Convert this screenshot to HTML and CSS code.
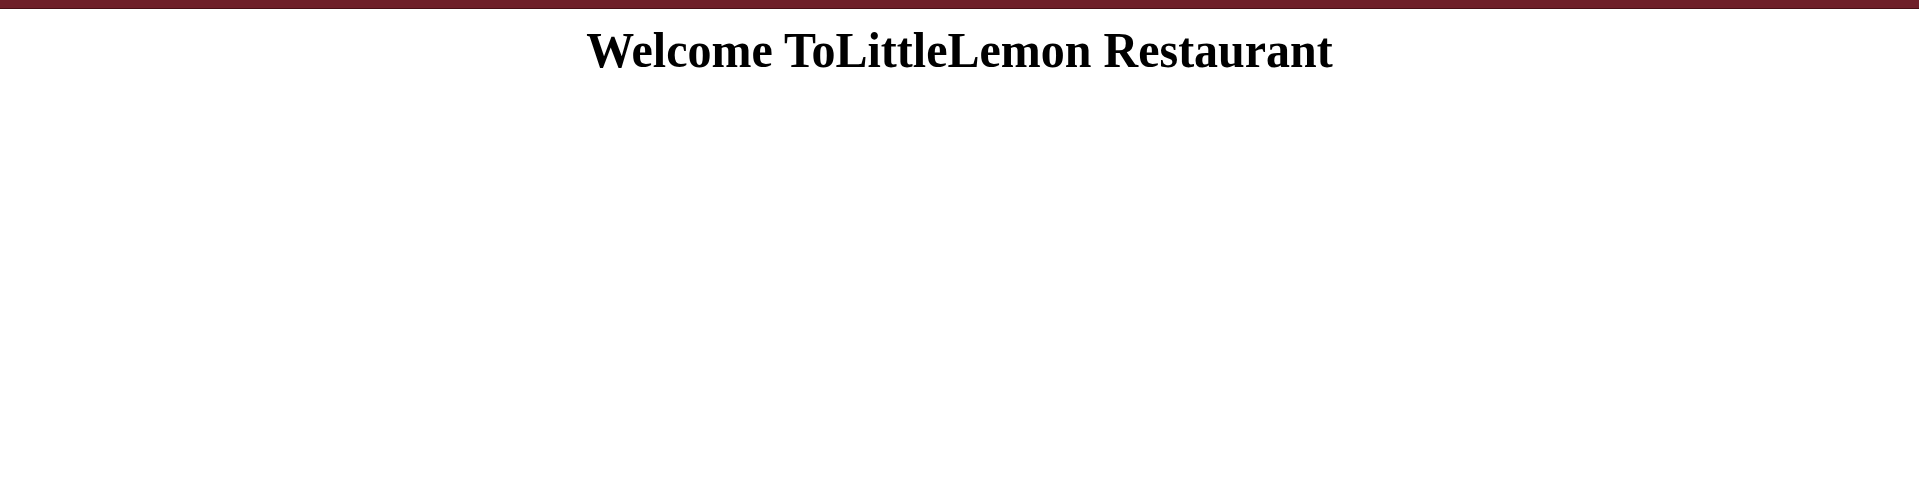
FILE: index.html
```html
<!DOCTYPE html>
<html>
<head>
<meta charset="utf-8">
<link rel="stylesheet" href="styles.css">
</head>
<body>
<header class="topbar"></header>
<h1 class="title">Welcome ToLittleLemon Restaurant</h1>
</body>
</html>
```
FILE: styles.css
```css
html, body { margin: 0; padding: 0; background: #fff; }
.topbar { height: 8px; background: #6f1f29; border-bottom: 1px solid #4a0f17; }
.title {
  margin: 18px 0 0;
  text-align: center;
  font-family: "Liberation Serif", "Times New Roman", serif;
  font-weight: bold;
  font-size: 48px;
  line-height: 48px;
  color: #000;
  transform: scaleY(1.07);
  transform-origin: 50% 40px;
}
```
